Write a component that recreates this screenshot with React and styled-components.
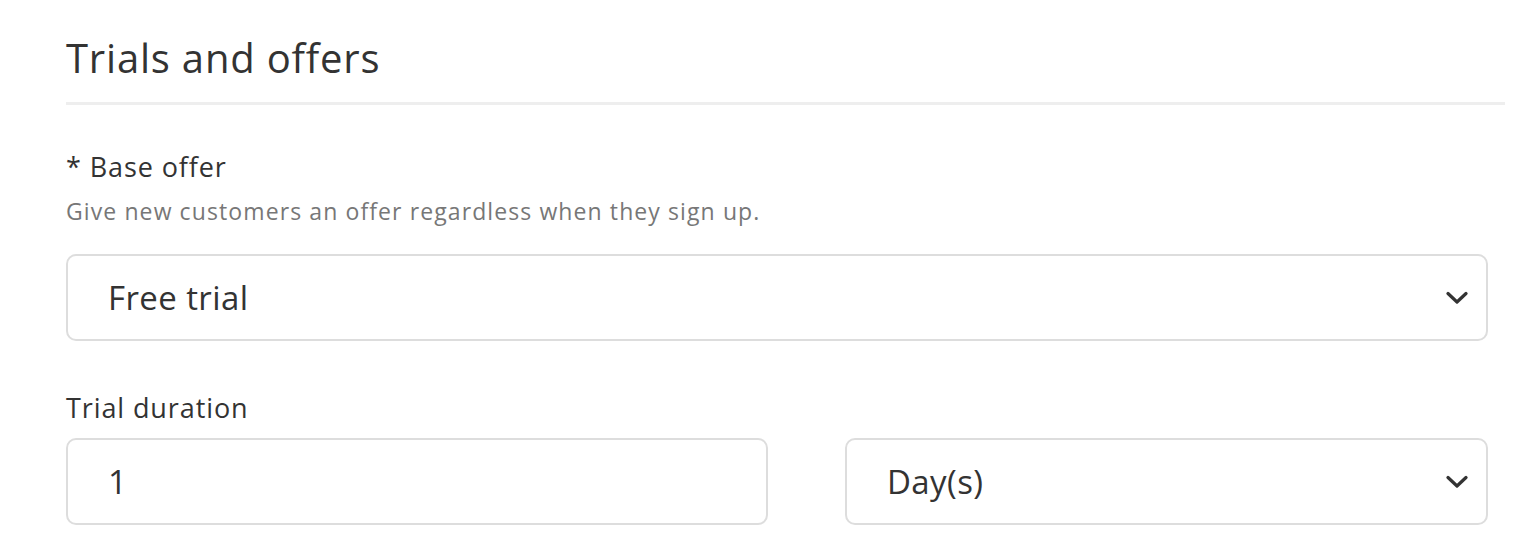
import styled, { createGlobalStyle } from 'styled-components'

const GlobalStyle = createGlobalStyle`
  body {
    margin: 0;
    background: #fff;
    font-family: "Open Sans", Lato, sans-serif;
    color: #333;
  }
`

const Section = styled.section`
  padding: 30px 25px 0 66px;
`

const Heading = styled.h2`
  margin: 0;
  font-size: 40px;
  font-weight: 400;
  line-height: 56px;
  color: #333;
  letter-spacing: 0.8px;
  padding-bottom: 16px;
  border-bottom: 3px solid #eeeeee;
`

const Field = styled.div`
  margin-top: ${p => p.top || 0}px;
  padding-right: 17px;
`

const Label = styled.div`
  font-size: 27px;
  line-height: 36px;
  color: #333;
  letter-spacing: 0.9px;
`

const Hint = styled.div`
  margin-top: 11px;
  font-size: 23px;
  line-height: 30px;
  color: #777;
  letter-spacing: 1.1px;
`

const Row = styled.div`
  display: grid;
  grid-template-columns: 702px 1fr;
  gap: 77px;
  margin-top: ${p => p.top || 0}px;
`

const Box = styled.div`
  box-sizing: border-box;
  height: 87px;
  border: 2px solid #dddddd;
  border-radius: 10px;
  display: flex;
  align-items: center;
  justify-content: space-between;
  padding: 0 18px 0 40px;
  margin-top: ${p => p.top || 0}px;
  font-size: 33px;
  color: #333;
  letter-spacing: 0.4px;
`

const Chevron = () => (
  <svg width="22" height="14" viewBox="0 0 22 14" fill="none">
    <path d="M2 2.5 L11 11 L20 2.5" stroke="#333" strokeWidth="3.2" strokeLinecap="round" strokeLinejoin="round" />
  </svg>
)

export default function App() {
  return (
    <>
      <GlobalStyle />
      <Section>
        <Heading>Trials and offers</Heading>
        <Field top={44}>
          <Label>* Base offer</Label>
          <Hint>Give new customers an offer regardless when they sign up.</Hint>
          <Box top={28}>
            <span>Free trial</span>
            <Chevron />
          </Box>
        </Field>
        <Field top={49}>
          <Label>Trial duration</Label>
          <Row top={12}>
            <Box>
              <span>1</span>
            </Box>
            <Box>
              <span>Day(s)</span>
              <Chevron />
            </Box>
          </Row>
        </Field>
      </Section>
    </>
  )
}
